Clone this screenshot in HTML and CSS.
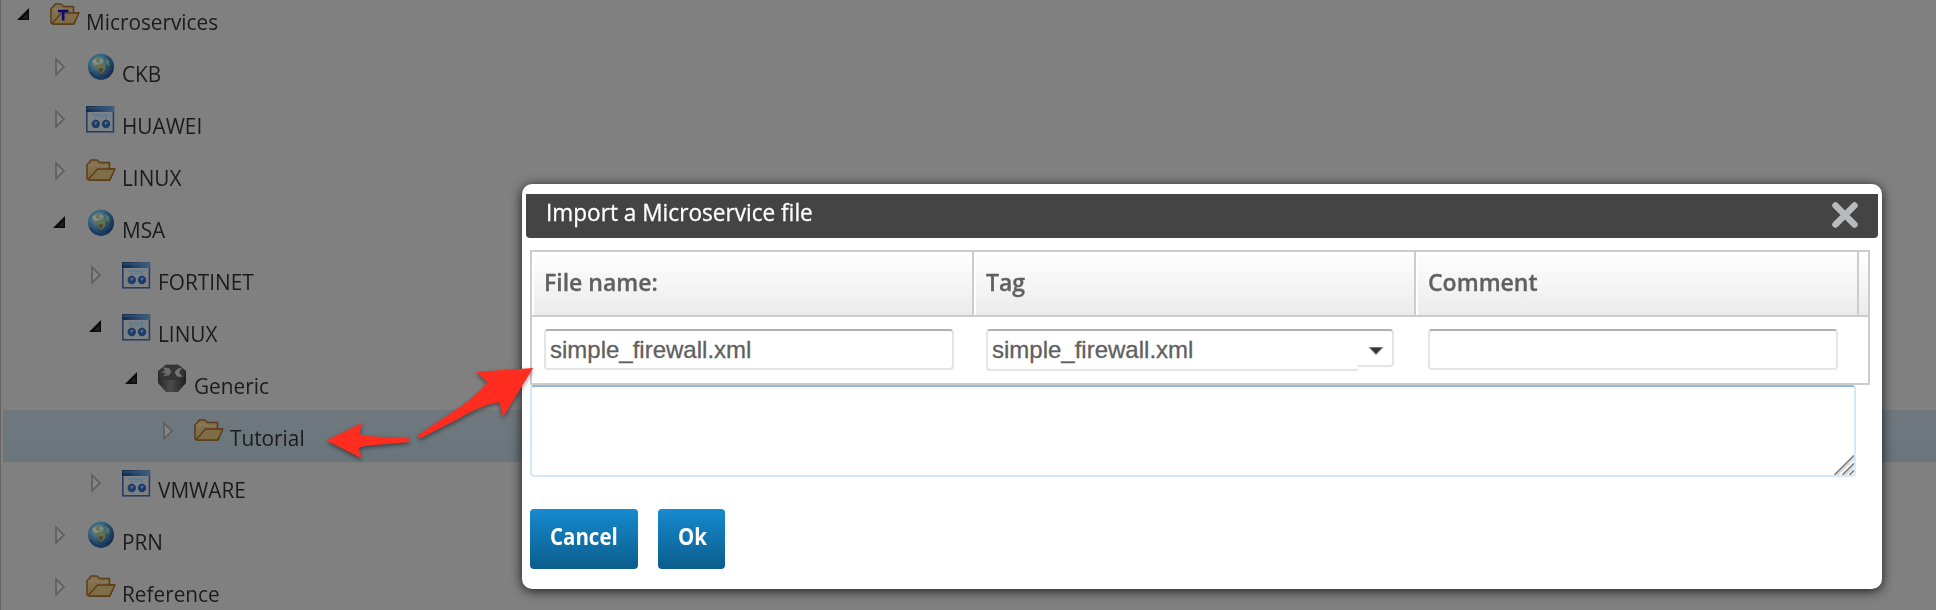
FILE: index.html
```
<!DOCTYPE html>
<html lang="en">
<head>
<meta charset="utf-8">
<title>Microservices</title>
<link rel="stylesheet" href="styles.css">
</head>
<body>
<svg class="defs" width="0" height="0">
  <defs>
    <linearGradient id="gFolder" x1="0" y1="0" x2="1" y2="1"><stop offset="0" stop-color="#85755a"/><stop offset="1" stop-color="#7b6233"/></linearGradient>
    <linearGradient id="gBar" x1="0" x2="1"><stop offset="0" stop-color="#15294a"/><stop offset="1" stop-color="#40617f"/></linearGradient>
    <radialGradient id="gGlobe" cx=".36" cy=".32" r=".7"><stop offset="0" stop-color="#7e8c8a"/><stop offset=".55" stop-color="#2f5873"/><stop offset="1" stop-color="#142a4c"/></radialGradient>
    <linearGradient id="gCan" x1="0" x2="1"><stop offset="0" stop-color="#292929"/><stop offset=".45" stop-color="#4b4b4b"/><stop offset="1" stop-color="#202020"/></linearGradient>
    <symbol id="open" viewBox="0 0 14 14"><path d="M1 13L13 1V13Z" fill="#0b0b0b"/><path d="M6 11.5L11.5 6V11.5Z" fill="#222"/></symbol>
    <symbol id="closed" viewBox="0 0 14 20"><path d="M4 2.2V17.8L12 10Z" fill="#858585" stroke="#606060" stroke-width="1.8"/></symbol>
    <symbol id="folder" viewBox="0 0 30 32">
      <path d="M1 25V10.500L3.500 8.500L5 6H11L13.500 8.500H23.500V14.500L28.500 15L24 26H2.500Z" fill="url(#gFolder)" stroke="#593d1a" stroke-width="1.500" stroke-linejoin="round"/>
      <path d="M2.500 25L11.500 15H29L23.500 26H3Z" fill="#806d46" stroke="#5a3c17" stroke-width="1.300" stroke-linejoin="round"/>
      <path d="M3 11H12L14 12H22" stroke="#8b7b5b" stroke-width="1.500" fill="none"/>
    </symbol>
    <symbol id="tfolder" viewBox="0 0 30 32"><use href="#folder"/><path d="M8 13H18.500M13.200 13V22.500" stroke="#09097b" stroke-width="2.600" fill="none"/></symbol>
    <symbol id="globe" viewBox="0 0 30 32">
      <circle cx="15" cy="16.800" r="13" fill="url(#gGlobe)"/>
      <path d="M7 10L11 7L14 10L12 13L16 15L19 13L19 20L15 24L12 19L9 15Z" fill="#65724f"/>
      <path d="M6 11L11 8L10 12L14 14L9 15Z" fill="#8b9080"/>
      <path d="M14 8L18 10L16 14L13 11Z" fill="#7f8a78"/>
      <path d="M19 8L23 11L23.500 16L20 14Z" fill="#4a7a68"/>
      <path d="M12.500 18.500L17.500 18.500L15 23Z" fill="#5a3a24"/>
      <path d="M3.200 15A12 12 0 0 1 19 5.400" fill="none" stroke="#2f6b83" stroke-width="1.800"/>
      <path d="M4.500 22A12 12 0 0 0 21 27" fill="none" stroke="#1b3968" stroke-width="2"/>
    </symbol>
    <symbol id="window" viewBox="0 0 30 32">
      <rect x=".8" y="4.800" width="26.600" height="25" fill="#7c8184" stroke="#2d3d60" stroke-width="1.600"/>
      <rect x="0" y="4" width="28.200" height="6" fill="url(#gBar)"/>
      <path d="M1 6H27" stroke="#325a80" stroke-width="1"/>
      <path d="M6.500 13H23.500M12 15.500H18M9.500 13V19M20 13V19" stroke="#5a7c97" stroke-width="1.500" fill="none"/>
      <circle cx="9.800" cy="22" r="4.200" fill="#1d3c66"/><circle cx="20" cy="22" r="4.200" fill="#1d3c66"/>
      <path d="M8.500 20L11.800 20L9 23.300Z M18.700 20L22 20L19.200 23.300Z" fill="#55769a"/>
    </symbol>
    <symbol id="router" viewBox="0 0 30 32">
      <path d="M0 9L8 2.500H20L28 9V21L20 30H8L0 21Z" fill="url(#gCan)"/>
      <path d="M1 9L8 3H20L27 9L26 15L20 18H9L2 15Z" fill="#353535"/>
      <path d="M5 5.500L11 6L13.500 9.500L11 13.500L5 14L8 11L2.500 10.500L7 8.500Z" fill="#6c6c6c"/>
      <path d="M24 6L20 6.500L16.500 10L19 14.500L24.500 15L21 10.500Z" fill="#757575"/>
    </symbol>
  </defs>
</svg>

<main class="page">
  <ul class="tree">
    <li class="row l0"><svg class="tg"><use href="#open"/></svg><svg class="ic"><use href="#tfolder"/></svg><span class="nm">Microservices</span></li>
    <li class="row l1"><svg class="tg c"><use href="#closed"/></svg><svg class="ic"><use href="#globe"/></svg><span class="nm">CKB</span></li>
    <li class="row l1"><svg class="tg c"><use href="#closed"/></svg><svg class="ic"><use href="#window"/></svg><span class="nm">HUAWEI</span></li>
    <li class="row l1"><svg class="tg c"><use href="#closed"/></svg><svg class="ic"><use href="#folder"/></svg><span class="nm">LINUX</span></li>
    <li class="row l1"><svg class="tg"><use href="#open"/></svg><svg class="ic"><use href="#globe"/></svg><span class="nm">MSA</span></li>
    <li class="row l2"><svg class="tg c"><use href="#closed"/></svg><svg class="ic"><use href="#window"/></svg><span class="nm">FORTINET</span></li>
    <li class="row l2"><svg class="tg"><use href="#open"/></svg><svg class="ic"><use href="#window"/></svg><span class="nm">LINUX</span></li>
    <li class="row l3"><svg class="tg"><use href="#open"/></svg><svg class="ic"><use href="#router"/></svg><span class="nm">Generic</span></li>
    <li class="row l4 selected"><svg class="tg c"><use href="#closed"/></svg><svg class="ic"><use href="#folder"/></svg><span class="nm">Tutorial</span></li>
    <li class="row l2"><svg class="tg c"><use href="#closed"/></svg><svg class="ic"><use href="#window"/></svg><span class="nm">VMWARE</span></li>
    <li class="row l1"><svg class="tg c"><use href="#closed"/></svg><svg class="ic"><use href="#globe"/></svg><span class="nm">PRN</span></li>
    <li class="row l1"><svg class="tg c"><use href="#closed"/></svg><svg class="ic"><use href="#folder"/></svg><span class="nm">Reference</span></li>
  </ul>

  <section class="dialog">
    <header class="titlebar">
      <h1 class="title">Import a Microservice file</h1>
      <svg class="close" viewBox="0 0 28 28"><path d="M4.500 4.500L23.500 23.500M23.500 4.500L4.500 23.500" stroke="#b9babb" stroke-width="6.500" stroke-linecap="round"/></svg>
    </header>
    <div class="grid">
      <div class="head">
        <div class="th"><span class="lbl">File name:</span></div>
        <div class="th"><span class="lbl">Tag</span></div>
        <div class="th last"><span class="lbl">Comment</span></div>
        <div class="filler"></div>
      </div>
      <div class="body">
        <div class="td"><div class="field">simple_firewall.xml</div></div>
        <div class="td combo"><div class="field text">simple_firewall.xml</div><div class="trigger"><svg width="18" height="12" viewBox="0 0 18 12"><path d="M1 2H17L9 10.500Z" fill="#bbb"/><path d="M2.500 2.500H15.500L9 9Z" fill="#333"/></svg></div></div>
        <div class="td"><div class="field"></div></div>
      </div>
    </div>
    <div class="area"><svg class="grip" viewBox="0 0 20 20"><path d="M.5 20L20 .5M8.500 20L20 8.500M15.500 20L20 15.500" stroke="#858585" stroke-width="1.800"/><path d="M3.500 20L20 3.500M11.500 20L20 11.500" stroke="#d4d4d4" stroke-width="1.500"/></svg></div>
    <div class="actions">
      <div class="btn cancel"><span class="cap">Cancel</span></div>
      <div class="btn ok"><span class="cap">Ok</span></div>
    </div>
  </section>

  <svg class="arrows" width="1936" height="610" viewBox="0 0 1936 610">
    <path d="M326.500 440.500L362 423L359.500 433.500Q363 436 375 436.500L407 438Q409.500 438 409.500 440Q409.500 442 407 442.300L375 445Q362 446 358.500 448L362 458.500Z"/>
    <path d="M533 368L476 372L487.500 382.500Q474 399 451 413L419 434.500Q416.500 438.500 421 438L458 419Q485 403 499.500 402.500L503 417Z"/>
  </svg>
</main>
</body>
</html>
```

FILE: styles.css
```
* { box-sizing: border-box; }
body { margin: 0; background: #808080; font-family: "Open Sans", "Noto Sans", sans-serif; }
.defs { position: absolute; }
.page { position: relative; width: 1936px; height: 610px; overflow: hidden; }

.tree { list-style: none; margin: -6px 0 0; padding: 0 0 0 2px; border-left: 1px solid #666; }
.row { display: flex; align-items: flex-start; height: 52px; }
.l0 { padding-left: 13px; }
.l1 { padding-left: 49px; }
.l2 { padding-left: 85px; }
.l3 { padding-left: 121px; }
.l4 { padding-left: 157px; }
.selected { background: linear-gradient(#70787c, #6d777e 40%, #69757b); }
.tg { width: 14px; height: 14px; margin: 13px 20px 0 0; flex: none; }
.tg.c { height: 20px; margin-top: 11px; }
.ic { width: 30px; height: 32px; margin-top: 4px; flex: none; }
.nm { margin: 12px 0 0 6px; font-size: 22px; line-height: 30px; color: #1b1b1b; white-space: nowrap; transform: scaleX(.945); transform-origin: left; }

.dialog { position: absolute; left: 522px; top: 184px; width: 1360px; height: 405px; padding: 10px 4px 0; background: #fff; border-radius: 10px; box-shadow: 0 2px 12px rgba(0,0,0,.8); }
.titlebar { display: flex; justify-content: space-between; height: 44px; padding: 0 19px 0 20px; background: #444; border-radius: 0 0 4px 4px; }
.title { margin: 2px 0 0; font-size: 23.5px; font-weight: 400; line-height: 32px; color: #fff; -webkit-text-stroke: .3px #fff; transform: scaleX(.962); transform-origin: left; }
.close { width: 28px; height: 28px; margin-top: 7px; }

.grid { width: 1340px; height: 135px; margin: 12px 0 0 4px; border: 2px solid #ccc; }
.head { display: flex; height: 65px; border-bottom: 2px solid #ccc; background: linear-gradient(#fff, #ebebeb); }
.th { width: 442px; padding: 13px 0 0 10px; border-left: 2px solid #fff; border-right: 2px solid #ccc; font-size: 23.5px; font-weight: 600; line-height: 34px; color: #606060; -webkit-text-stroke: .3px #606060; }
.th.last { width: 443px; }
.lbl { display: inline-block; transform: scaleX(.98); transform-origin: left; }
.filler { flex: 1; }
.body { display: flex; padding-top: 12px; }
.td { display: flex; width: 442px; padding-left: 12px; }
.field { width: 410px; height: 41px; padding-left: 4px; border: 2px solid #e5e5e5; border-top-color: #b0b0b0; border-radius: 4px; font: 24px/38px "Liberation Sans", Arial, sans-serif; color: #606060; -webkit-text-stroke: .3px #606060; }
.field.text { width: 372px; height: 42px; border-right: 0; border-radius: 4px 0 0 4px; }
.trigger { display: flex; width: 36px; height: 38px; padding: 14px 0 0 9px; border: 2px solid #e5e5e5; border-left: 0; border-top-color: #b0b0b0; border-radius: 0 4px 4px 0; }
.area { display: flex; align-items: flex-end; justify-content: flex-end; width: 1326px; height: 92px; margin-left: 4px; border: 2px solid #d4e8fa; border-top-color: #94b8d7; border-radius: 4px; }
.grip { width: 20px; height: 20px; }
.actions { display: flex; gap: 20px; margin: 32px 0 0 4px; }
.btn { height: 60px; padding: 11px 0 0 20px; border-radius: 4px; background: linear-gradient(#168ad0, #0b5d8b); color: #fff; font-size: 22.5px; font-weight: 700; line-height: 34px; white-space: nowrap; }
.cap { display: inline-block; transform: scaleX(.91); transform-origin: left; }
.cancel { width: 108px; }
.ok { width: 67px; }
.arrows { position: absolute; left: 0; top: 0; fill: #ff2d1f; filter: drop-shadow(0 2px 2px rgba(0,0,0,.45)); }
```
